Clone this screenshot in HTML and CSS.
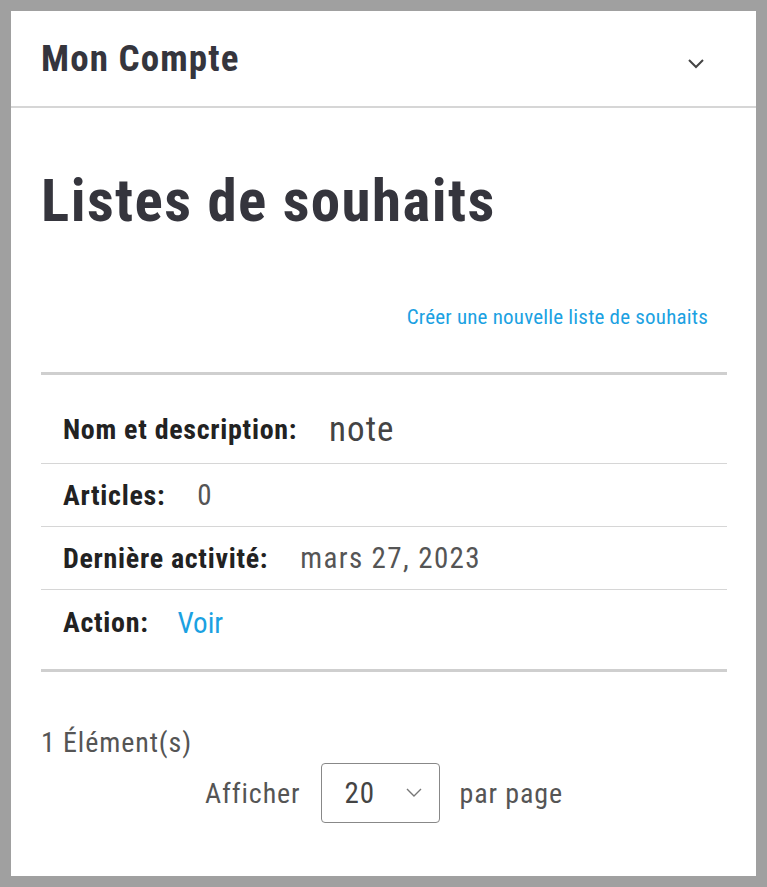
FILE: index.html
```html
<!DOCTYPE html>
<html lang="fr">
<head>
  <meta charset="UTF-8" />
  <meta name="viewport" content="width=device-width, initial-scale=1.0"/>
  <title>Mon Compte</title>
  <link rel="stylesheet" href="styles.css">
</head>
<body>

  <!-- Account panel -->
  <div class="panel">
    <div class="panel-head">
      <span>Mon Compte</span>
      <svg class="chev" width="20" height="12" viewBox="0 0 20 12">
        <path d="M3 2 L10 9 L17 2" fill="none" stroke="#444" stroke-width="2"/>
      </svg>
    </div>

    <div class="content">
      <h1>Listes de souhaits</h1>

      <div class="new-list">
        <a href="#">Créer une nouvelle liste de souhaits</a>
      </div>

      <!-- Wishlist table (mobile layout) -->
      <div class="wishlist">
        <div class="row first">
          <span class="label">Nom et description:</span>
          <span class="value big">note</span>
        </div>
        <div class="row">
          <span class="label">Articles:</span>
          <span class="value">0</span>
        </div>
        <div class="row">
          <span class="label">Dernière activité:</span>
          <span class="value">mars 27, 2023</span>
        </div>
        <div class="row last">
          <span class="label">Action:</span>
          <a class="value link" href="#">Voir</a>
        </div>
      </div>

      <div class="count">1 Élément(s)</div>

      <div class="limiter">
        <span>Afficher</span>
        <div class="select">
          <span>20</span>
          <svg width="20" height="12" viewBox="0 0 20 12">
            <path d="M3 2 L10 9 L17 2" fill="none" stroke="#777" stroke-width="1.4"/>
          </svg>
        </div>
        <span>par page</span>
      </div>
    </div>
  </div>

</body>
</html>
```

FILE: styles.css
```css
* { box-sizing: border-box; }
body {
  margin: 0;
  background: #a0a0a0;
  padding: 11px;
  font-family: "Roboto Condensed", "Liberation Sans Narrow", "Liberation Sans", sans-serif;
  color: #333;
}

/* White card */
.panel {
  background: #fff;
  height: 865px;
}

.panel-head {
  display: flex;
  justify-content: space-between;
  align-items: center;
  height: 97px;
  padding: 0 50px 0 30px;
  border-bottom: 2px solid #d6d6d6;
  font-size: 37px;
  letter-spacing: 1.1px;
  font-weight: bold;
  color: #35353d;
}

.chev {
  margin-top: 10px;
}

.content {
  padding: 0 29px 0 30px;
}

h1 {
  margin: 0;
  padding-top: 57px;
  font-size: 59px;
  line-height: 72px;
  letter-spacing: 1.4px;
  color: #35353d;
}

.new-list {
  text-align: right;
  padding: 67px 19px 0 0;
  font-size: 21px;
  line-height: 26px;
  letter-spacing: 0.2px;
}

.new-list a {
  color: #1ba1e2;
  text-decoration: none;
}

/* Table of wishlist details */
.wishlist {
  margin-top: 42px;
  border-top: 3px solid #cfcfcf;
  border-bottom: 3px solid #cfcfcf;
}

.row {
  display: flex;
  align-items: center;
  gap: 32px;
  height: 63px;
  padding-left: 22px;
  border-bottom: 1px solid #d6d6d6;
  font-size: 28px;
  letter-spacing: 0.7px;
}

.row.first {
  height: 89px;
  padding-top: 20px;
}

.row.last {
  border-bottom: none;
  height: 79px;
  padding-bottom: 14px;
  gap: 29px;
}

.label {
  font-weight: bold;
  color: #222;
}

.value {
  font-size: 29px;
  letter-spacing: 1.4px;
  color: #555;
}

.value.big {
  font-size: 35px;
  letter-spacing: 1px;
  color: #444;
}

.value.link {
  letter-spacing: 0;
  color: #1ba1e2;
  text-decoration: none;
}

.count {
  margin-top: 54px;
  font-size: 28px;
  line-height: 34px;
  letter-spacing: 0.9px;
  color: #555;
}

.limiter {
  display: flex;
  align-items: center;
  justify-content: center;
  gap: 20px;
  margin-top: 3px;
  font-size: 28px;
  letter-spacing: 0.9px;
  color: #555;
}

.select {
  display: flex;
  align-items: center;
  justify-content: space-between;
  width: 119px;
  height: 60px;
  padding: 0 15px 0 23px;
  border: 1px solid #888;
  border-radius: 4px;
  font-size: 29px;
  color: #444;
}
```
